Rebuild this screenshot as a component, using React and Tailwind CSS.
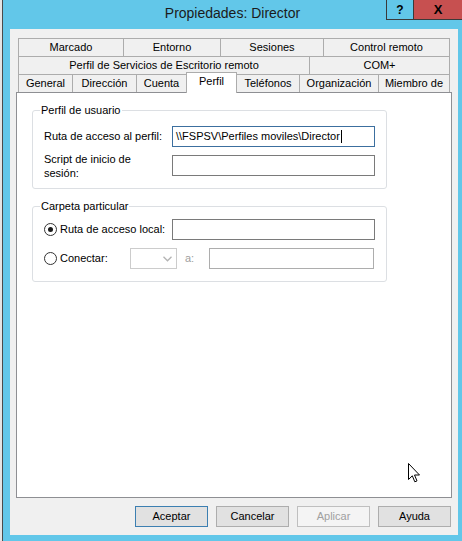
const font = { fontFamily: '"Liberation Sans", Arial, sans-serif' };

const row1 = [
  { label: "Marcado", w: "w-[105px]" },
  { label: "Entorno", w: "w-[97px]" },
  { label: "Sesiones", w: "w-[103px]" },
  { label: "Control remoto", w: "w-[127px]" },
];
const row2 = [
  { label: "Perfil de Servicios de Escritorio remoto", w: "w-[291px]" },
  { label: "COM+", w: "w-[141px]" },
];
const row3 = [
  { label: "General", w: "w-[54px]" },
  { label: "Dirección", w: "w-[64px]" },
  { label: "Cuenta", w: "w-[50px]" },
  { label: "Perfil", w: "w-[51px]", active: true },
  { label: "Teléfonos", w: "w-[62px]" },
  { label: "Organización", w: "w-[79px]" },
  { label: "Miembro de", w: "w-[72px]" },
];

const TabRow = ({ tabs }) => (
  <div className="flex h-[18px] items-start">
    {tabs.map((t, i) =>
      t.active ? (
        <div
          key={t.label}
          className={`${t.w} relative z-10 -mt-[2px] h-[21px] shrink-0 border-x border-t border-[#acacac] bg-white pt-[2px] text-center leading-[13px]`}
        >
          {t.label}
        </div>
      ) : (
        <div
          key={t.label}
          className={`${t.w} h-[18px] shrink-0 border-t border-l border-[#acacac] bg-[#f0f0f0] text-center leading-[16px] ${
            i === tabs.length - 1 ? "border-r" : ""
          } ${tabs[i - 1]?.active ? "border-l-0" : ""}`}
        >
          {t.label}
        </div>
      )
    )}
  </div>
);

const Radio = ({ checked }) => (
  <span className="flex size-[13px] shrink-0 items-center justify-center rounded-full border border-[#333] bg-white">
    {checked && <span className="size-[5px] rounded-full bg-[#1a1a1a]" />}
  </span>
);

const Btn = ({ children, variant }) => {
  const styles = {
    default: "border-[#3c7fb1] bg-[#e1e1e1] text-black",
    normal: "border-[#adadad] bg-[#e1e1e1] text-black",
    disabled: "border-[#bfbfbf] bg-[#f4f4f4] text-[#a0a0a0]",
  };
  return (
    <div className={`flex h-[21px] w-[73px] items-center justify-center border ${styles[variant]}`}>
      {children}
    </div>
  );
};

export default function App() {
  return (
    <div className="flex h-[541px] w-[462px] overflow-hidden text-[11px] text-black" style={font}>
      {/* background window sliver */}
      <div className="h-full w-[3px] border-r border-[#4a4a4a] bg-[#e4e4e4]" />

      <div className="flex flex-1 flex-col bg-[#62c7e9]">
        {/* Title bar */}
        <div className="flex h-[29px] shrink-0 items-start">
          <div className="w-[76px]" />
          <div className="flex h-[27px] flex-1 items-center justify-center text-[14px] text-[#1b1b1b]">
            Propiedades: Director
          </div>
          <div className="flex h-[20px] w-[27px] items-center justify-center border-b border-l border-[#3a3a3a] text-[12px] font-bold">
            ?
          </div>
          <div className="flex h-[20px] w-[49px] items-center justify-center border-b border-l border-[#3a3a3a] bg-[#c75050] text-[13px] font-bold">
            X
          </div>
        </div>

        {/* Client area */}
        <div className="relative ml-[7px] flex h-[506px] w-[448px] flex-col bg-[#f0f0f0] px-[6px] pt-[9px]">
          <div className="mx-[2px] flex flex-col">
            <TabRow tabs={row1} />
            <TabRow tabs={row2} />
            <TabRow tabs={row3} />
          </div>

          {/* Tab page */}
          <div className="flex h-[406px] flex-col border border-[#8e8f93] bg-white px-[15px]">
            <fieldset className="mt-[11px] w-[355px] rounded-[3px] border border-[#dcdfe3] px-0 pb-[12px]">
              <legend className="ml-[7px] px-[1px] leading-[13px]">Perfil de usuario</legend>
              <div className="grid grid-cols-[128px_203px] items-center gap-y-[8px] pt-[9px] pl-[11px]">
                <span>Ruta de acceso al perfil:</span>
                <div className="flex h-[21px] items-center border border-[#3c6f9f] bg-white pl-[3px]">
                  <span>\\FSPSV\Perfiles moviles\Director</span>
                  <span className="ml-[1px] h-[13px] w-px bg-black" />
                </div>
                <span className="-my-[4px] leading-[14px]">
                  Script de inicio de
                  <br />
                  sesión:
                </span>
                <div className="h-[21px] border border-[#7a7a7a] bg-white" />
              </div>
            </fieldset>

            <fieldset className="mt-[11px] w-[355px] rounded-[3px] border border-[#dcdfe3] px-0 pb-[12px]">
              <legend className="ml-[7px] px-[1px] leading-[13px]">Carpeta particular</legend>
              <div className="flex flex-col gap-y-[8px] pt-[6px] pl-[11px]">
                <div className="flex items-center">
                  <div className="flex w-[128px] items-center gap-[3px]">
                    <Radio checked />
                    <span>Ruta de acceso local:</span>
                  </div>
                  <div className="h-[21px] w-[203px] border border-[#7a7a7a] bg-white" />
                </div>
                <div className="flex items-center">
                  <div className="flex w-[86px] items-center gap-[3px]">
                    <Radio />
                    <span>Conectar:</span>
                  </div>
                  <div className="flex h-[21px] w-[47px] items-center justify-end border border-[#cccccc] bg-white pr-[4px]">
                    <svg width="9" height="6" viewBox="0 0 9 6" fill="none">
                      <path d="M0.5 0.8 L4.5 4.8 L8.5 0.8" stroke="#b3b3b3" strokeWidth="1.3" />
                    </svg>
                  </div>
                  <span className="w-[32px] pl-[8px] text-[#a0a0a0]">a:</span>
                  <div className="h-[21px] w-[165px] border border-[#adadad] bg-white" />
                </div>
              </div>
            </fieldset>
          </div>

          {/* Buttons */}
          <div className="mt-[8px] flex justify-end gap-[8px] pr-[1px]">
            <Btn variant="default">Aceptar</Btn>
            <Btn variant="normal">Cancelar</Btn>
            <Btn variant="disabled">Aplicar</Btn>
            <Btn variant="normal">Ayuda</Btn>
          </div>

          {/* mouse pointer */}
          <svg
            className="absolute top-[434px] left-[398px]"
            width="13"
            height="21"
            viewBox="0 0 13 21"
          >
            <path
              d="M0.5 0.5 L0.5 16.5 L4.3 12.8 L6.8 18.8 L9 17.9 L6.5 12 L11.5 12 Z"
              fill="white"
              stroke="black"
              strokeWidth="1"
              strokeLinejoin="miter"
            />
          </svg>
        </div>
      </div>
    </div>
  );
}
